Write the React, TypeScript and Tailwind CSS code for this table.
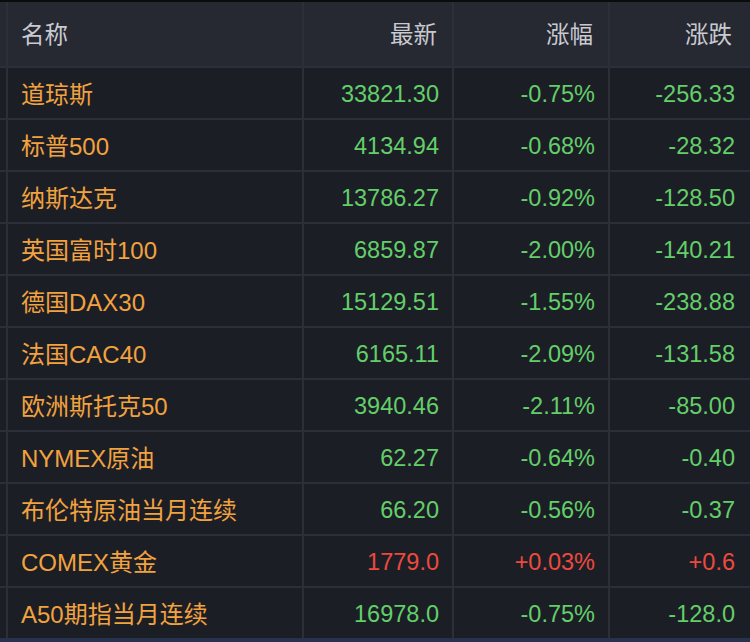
import React from "react";

type Row = { name: string; last: string; pct: string; chg: string; up?: boolean };

const rows: Row[] = [
  { name: "道琼斯", last: "33821.30", pct: "-0.75%", chg: "-256.33" },
  { name: "标普500", last: "4134.94", pct: "-0.68%", chg: "-28.32" },
  { name: "纳斯达克", last: "13786.27", pct: "-0.92%", chg: "-128.50" },
  { name: "英国富时100", last: "6859.87", pct: "-2.00%", chg: "-140.21" },
  { name: "德国DAX30", last: "15129.51", pct: "-1.55%", chg: "-238.88" },
  { name: "法国CAC40", last: "6165.11", pct: "-2.09%", chg: "-131.58" },
  { name: "欧洲斯托克50", last: "3940.46", pct: "-2.11%", chg: "-85.00" },
  { name: "NYMEX原油", last: "62.27", pct: "-0.64%", chg: "-0.40" },
  { name: "布伦特原油当月连续", last: "66.20", pct: "-0.56%", chg: "-0.37" },
  { name: "COMEX黄金", last: "1779.0", pct: "+0.03%", chg: "+0.6", up: true },
  { name: "A50期指当月连续", last: "16978.0", pct: "-0.75%", chg: "-128.0" },
];

export default function App() {
  const font = { fontFamily: '"Liberation Sans", "Noto Sans CJK SC", sans-serif' };
  return (
    <div className="w-[750px] h-[642px] overflow-hidden bg-[#27334d]" style={font}>
      <div className="h-[2px] bg-[#0b0b0d]" />
      <div className="grid grid-cols-[6px_294px_148px_154px_1fr] gap-[2px] bg-[#2c2f3a] text-[23.5px]">
        <div className="h-[64px] bg-[#262832]" />
        <div className="h-[64px] bg-[#262832] flex items-center pt-[4px] pl-[13px] text-[#c9cad0]">名称</div>
        <div className="h-[64px] bg-[#262832] flex items-center justify-end pt-[4px] pr-[15px] text-[#c9cad0]">最新</div>
        <div className="h-[64px] bg-[#262832] flex items-center justify-end pt-[4px] pr-[15px] text-[#c9cad0]">涨幅</div>
        <div className="h-[64px] bg-[#262832] flex items-center justify-end pt-[4px] pr-[18px] text-[#c9cad0]">涨跌</div>
        {rows.map((r) => {
          const c = r.up ? "text-[#ec4a3f]" : "text-[#63cf69]";
          return (
            <React.Fragment key={r.name}>
              <div className="h-[50px] bg-[#1c1e26]" />
              <div className="h-[50px] bg-[#1c1e26] flex items-center pt-[4px] pl-[13px] text-[24px] text-[#f2a23e]">{r.name}</div>
              <div className={`h-[50px] bg-[#1c1e26] flex items-center justify-end pt-[4px] pr-[13px] ${c}`}>{r.last}</div>
              <div className={`h-[50px] bg-[#1c1e26] flex items-center justify-end pt-[4px] pr-[13px] ${c}`}>{r.pct}</div>
              <div className={`h-[50px] bg-[#1c1e26] flex items-center justify-end pt-[4px] pr-[15px] ${c}`}>{r.chg}</div>
            </React.Fragment>
          );
        })}
      </div>
    </div>
  );
}
